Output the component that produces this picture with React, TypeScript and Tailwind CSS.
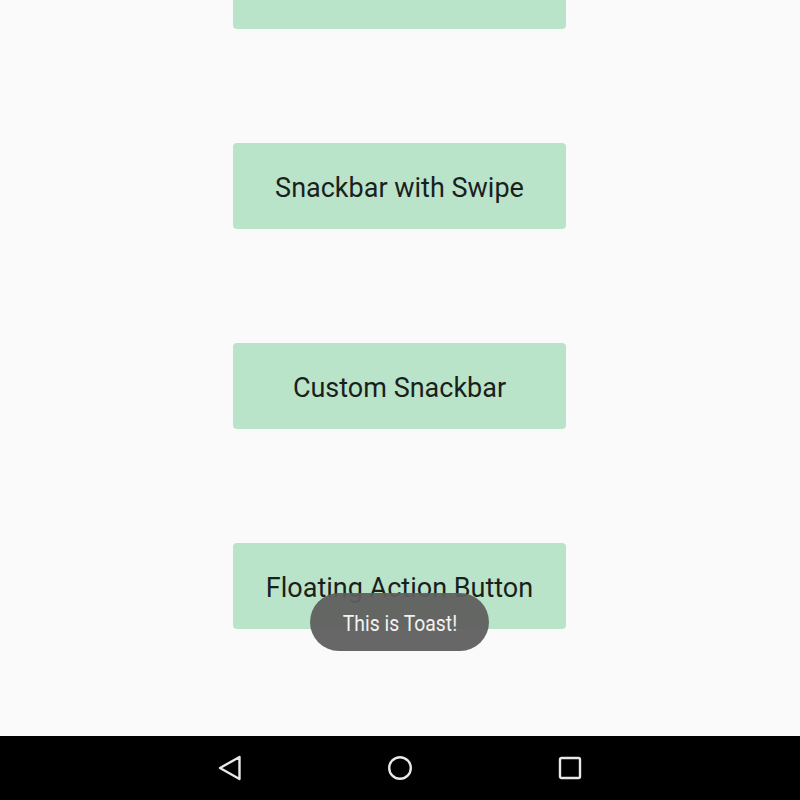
const labels = ["", "Snackbar with Swipe", "Custom Snackbar", "Floating Action Button"];

export default function App() {
  return (
    <div
      className="relative flex h-[800px] w-[800px] flex-col overflow-hidden bg-[#fafafa]"
      style={{ fontFamily: "Roboto, 'Liberation Sans', sans-serif" }}
    >
      {/* first button scrolled mostly out of view, its label is above the edge */}
      <div className="flex flex-1 flex-col items-start gap-[114px] pl-[233px] -mt-[57px]">
        {labels.map((label, i) => (
          <button
            key={i}
            type="button"
            className="flex h-[86px] w-[333px] shrink-0 items-center justify-center rounded-[4px] bg-[#b9e4c9] pt-[4px] text-[27px] text-[#1b1f1c]"
          >
            {label}
          </button>
        ))}
      </div>

      {/* toast */}
      <div className="absolute left-[310px] top-[593px] flex h-[58px] w-[179px] items-center justify-center rounded-full bg-[#5f5f5f]/95 pt-[3px]">
        <span className="scale-x-[0.88] whitespace-nowrap text-[22px] leading-none text-[#f2f2f2]">
          This is Toast!
        </span>
      </div>

      <nav className="flex h-[64px] shrink-0 items-center bg-black">
        <div className="flex w-full items-center justify-center gap-[145px] text-[#e8e8e8]">
          <svg width="24" height="26" viewBox="0 0 24 26" fill="none" stroke="currentColor" strokeWidth="2.4" strokeLinejoin="round">
            <path d="M21.5 2 L2 13 L21.5 24 Z" />
          </svg>
          <svg width="26" height="26" viewBox="0 0 26 26" fill="none" stroke="currentColor" strokeWidth="2.4">
            <circle cx="13" cy="13" r="10.8" />
          </svg>
          <svg width="24" height="24" viewBox="0 0 24 24" fill="none" stroke="currentColor" strokeWidth="2.4">
            <rect x="2" y="2" width="20" height="20" rx="1.5" />
          </svg>
        </div>
      </nav>
    </div>
  );
}
